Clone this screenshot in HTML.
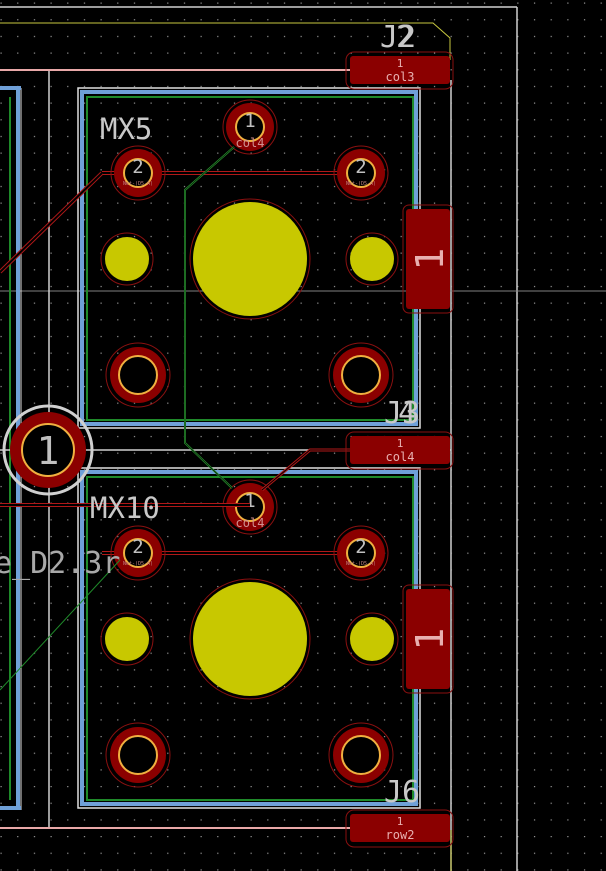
<!DOCTYPE html>
<html><head><meta charset="utf-8"><style>
html,body{margin:0;padding:0;background:#000;width:606px;height:871px;overflow:hidden}
svg{display:block}
text{font-family:"DejaVu Sans Mono","Liberation Mono",monospace}
</style></head><body>
<svg width="606" height="871" viewBox="0 0 606 871" xmlns="http://www.w3.org/2000/svg">
<defs>
<pattern id="g" x="0.5" y="2.5" width="16.67" height="16.67" patternUnits="userSpaceOnUse">
<rect x="0" y="0" width="1.2" height="1.2" fill="#9a9a9a"/>
</pattern>
<g id="fp">
 <rect x="78" y="88" width="342" height="340" fill="none" stroke="#e0e0e0" stroke-width="1.5"/>
 <rect x="82" y="92" width="334" height="332" fill="none" stroke="#6fa0d8" stroke-width="4"/>
 <rect x="87" y="97" width="326" height="323" fill="none" stroke="#1f8a2a" stroke-width="2"/>
 <line x1="102" y1="173" x2="361" y2="173" stroke="#b01818" stroke-width="4"/>
 <line x1="102" y1="173" x2="361" y2="173" stroke="#000" stroke-width="2"/>
 <circle cx="250" cy="259" r="60" fill="none" stroke="#8a1010" stroke-width="1"/>
 <circle cx="250" cy="259" r="57" fill="#c8c800"/>
 <circle cx="127" cy="259" r="26" fill="none" stroke="#8a1010" stroke-width="1"/>
 <circle cx="127" cy="259" r="22" fill="#c8c800"/>
 <circle cx="372" cy="259" r="26" fill="none" stroke="#8a1010" stroke-width="1"/>
 <circle cx="372" cy="259" r="22" fill="#c8c800"/>
 <circle cx="138" cy="375" r="32" fill="none" stroke="#8a1010" stroke-width="1"/>
 <circle cx="138" cy="375" r="28" fill="#8b0000"/>
 <circle cx="138" cy="375" r="19" fill="#000" stroke="#f0b040" stroke-width="2"/>
 <circle cx="361" cy="375" r="32" fill="none" stroke="#8a1010" stroke-width="1"/>
 <circle cx="361" cy="375" r="28" fill="#8b0000"/>
 <circle cx="361" cy="375" r="19" fill="#000" stroke="#f0b040" stroke-width="2"/>
 <circle cx="250" cy="127" r="27" fill="none" stroke="#8a1010" stroke-width="1"/>
 <circle cx="250" cy="127" r="24" fill="#8b0000"/>
 <circle cx="250" cy="127" r="14" fill="#000" stroke="#f0b040" stroke-width="2"/>
 <text x="250" y="127" font-size="19" fill="#c0c0c0" text-anchor="middle">1</text>
 <text x="250" y="147" font-size="12" fill="#d09090" text-anchor="middle">col4</text>
 <circle cx="138" cy="173" r="27" fill="none" stroke="#8a1010" stroke-width="1"/>
 <circle cx="138" cy="173" r="24" fill="#8b0000"/>
 <circle cx="138" cy="173" r="14" fill="#000" stroke="#f0b040" stroke-width="2"/>
 <text x="138" y="173" font-size="19" fill="#c0c0c0" text-anchor="middle">2</text>
 <text x="138" y="185" font-size="5" fill="#c08080" text-anchor="middle">Net-(D5-A)</text>
 <circle cx="361" cy="173" r="27" fill="none" stroke="#8a1010" stroke-width="1"/>
 <circle cx="361" cy="173" r="24" fill="#8b0000"/>
 <circle cx="361" cy="173" r="14" fill="#000" stroke="#f0b040" stroke-width="2"/>
 <text x="361" y="173" font-size="19" fill="#c0c0c0" text-anchor="middle">2</text>
 <text x="361" y="185" font-size="5" fill="#c08080" text-anchor="middle">Net-(D5-A)</text>
 <rect x="403" y="205" width="50" height="108" rx="6" fill="none" stroke="#8a1010" stroke-width="1"/>
 <rect x="406" y="209" width="44" height="100" rx="3" fill="#8b0000"/>
 <text transform="translate(443,259) rotate(-90)" font-size="38" fill="#e8b0b0" text-anchor="middle" font-family="Liberation Sans">1</text>
</g>
</defs>
<rect width="606" height="871" fill="#000"/>
<rect width="606" height="871" fill="url(#g)"/>

<line x1="0" y1="7" x2="517" y2="7" stroke="#d0d0d0" stroke-width="1.5"/>
<line x1="517" y1="7" x2="517" y2="871" stroke="#d0d0d0" stroke-width="1.5"/>
<line x1="451" y1="80" x2="451" y2="871" stroke="#d0d0d0" stroke-width="1.5"/>
<polyline points="0,23 433,23 450,38 450,60" fill="none" stroke="#c8c840" stroke-width="1"/>
<line x1="451" y1="830" x2="451" y2="871" stroke="#c8c840" stroke-width="1"/>
<line x1="0" y1="291" x2="606" y2="291" stroke="#808080" stroke-width="1"/>

<line x1="18" y1="88" x2="18" y2="810" stroke="#6fa0d8" stroke-width="4"/>
<line x1="21" y1="88" x2="21" y2="810" stroke="#e0e0e0" stroke-width="1"/>
<line x1="10" y1="97" x2="10" y2="800" stroke="#1f8a2a" stroke-width="2"/>
<line x1="0" y1="88" x2="21" y2="88" stroke="#6fa0d8" stroke-width="4"/>
<line x1="0" y1="808" x2="21" y2="808" stroke="#6fa0d8" stroke-width="4"/>
<line x1="49" y1="70" x2="49" y2="828" stroke="#d0d0d0" stroke-width="1.5"/>

<line x1="0" y1="70" x2="350" y2="70" stroke="#e8a8a8" stroke-width="2"/>

<use href="#fp"/>
<use href="#fp" y="380"/>

<line x1="0" y1="450" x2="451" y2="450" stroke="#d0d0d0" stroke-width="1.5"/>
<polyline points="350,450 310,450 262,490" fill="none" stroke="#b01818" stroke-width="3"/>
<polyline points="350,450 310,450 262,490" fill="none" stroke="#000" stroke-width="1"/>
<line x1="0" y1="505" x2="250" y2="505" stroke="#b01818" stroke-width="4"/>
<line x1="0" y1="505" x2="250" y2="505" stroke="#000" stroke-width="2"/>
<line x1="0" y1="828" x2="350" y2="828" stroke="#e8a8a8" stroke-width="2"/>
<line x1="102" y1="173" x2="0" y2="272" stroke="#b01818" stroke-width="4"/>
<line x1="102" y1="173" x2="0" y2="272" stroke="#000" stroke-width="2"/>
<line x1="120" y1="560" x2="0" y2="690" stroke="#1f8a2a" stroke-width="1"/>
<polyline points="234,147 185,190 185,443 232,488" fill="none" stroke="#2a9a30" stroke-width="2"/>
<polyline points="234,147 185,190 185,443 232,488" fill="none" stroke="#000" stroke-width="0.6"/>

<g font-size="11" fill="#e8b0b0" text-anchor="middle">
<rect x="346" y="52" width="107" height="37" rx="8" fill="none" stroke="#8a1010"/>
<rect x="350" y="56" width="100" height="28" rx="3" fill="#8b0000"/>
<text x="400" y="67">1</text><text x="400" y="81" font-size="12">col3</text>
<rect x="346" y="432" width="107" height="37" rx="8" fill="none" stroke="#8a1010"/>
<rect x="350" y="436" width="100" height="28" rx="3" fill="#8b0000"/>
<text x="400" y="447">1</text><text x="400" y="461" font-size="12">col4</text>
<rect x="346" y="810" width="107" height="37" rx="8" fill="none" stroke="#8a1010"/>
<rect x="350" y="814" width="100" height="28" rx="3" fill="#8b0000"/>
<text x="400" y="825">1</text><text x="400" y="839" font-size="12">row2</text>
</g>

<circle cx="48" cy="450" r="44" fill="none" stroke="#d0d0d0" stroke-width="3"/>
<circle cx="48" cy="450" r="38" fill="#8b0000"/>
<circle cx="48" cy="450" r="26" fill="#000" stroke="#f0b040" stroke-width="2"/>
<text x="48" y="464" font-size="38" fill="#c0c0c0" text-anchor="middle" font-family="Liberation Sans">1</text>

<g fill="#c8c8c8" font-family="Liberation Sans">
<text x="100" y="139" font-size="29">MX5</text>
<text x="90" y="518" font-size="29">MX10</text>
<text x="-6" y="573" font-size="30" fill="#a8a8a8">e_D2.3r</text>
<text x="380" y="47" font-size="30">J2</text>
<text x="396" y="47" font-size="30">2</text>
<text x="384" y="423" font-size="30">J3</text>
<text x="398" y="423" font-size="30">4</text>
<text x="384" y="802" font-size="30">J6</text>
</g>
</svg>
</body></html>
